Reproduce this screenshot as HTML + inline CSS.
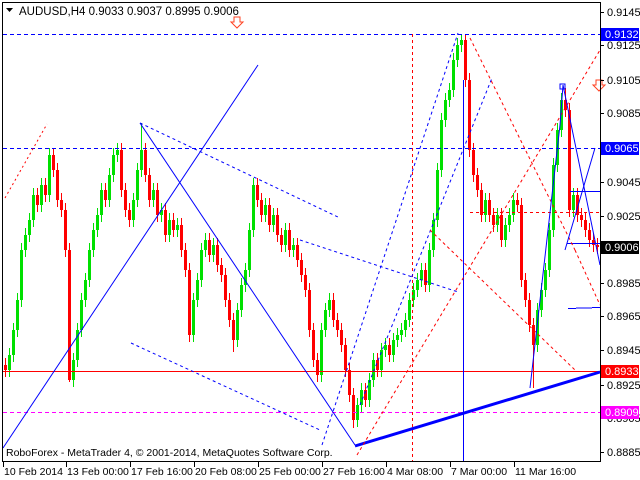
<!DOCTYPE html>
<html><head><meta charset="utf-8"><style>
html,body{margin:0;padding:0;background:#fff;width:640px;height:480px;overflow:hidden}
svg{display:block}
text{font-family:"Liberation Sans",sans-serif;font-size:11px;fill:#000}
</style></head><body>
<svg width="640" height="480" viewBox="0 0 640 480" xmlns="http://www.w3.org/2000/svg">
<rect x="0" y="0" width="640" height="480" fill="#fff"/>
<g shape-rendering="crispEdges" fill="none">
<path stroke="#00e000" stroke-width="1" d="M9.5 348V377M13.5 323V362M17.5 293V337M21.5 243V307M25.5 228V257M29.5 213V242M33.5 188V227M41.5 178V212M49.5 148V202M73.5 353V387M77.5 323V367M81.5 293V337M85.5 273V307M89.5 243V287M93.5 223V257M97.5 208V237M101.5 183V222M109.5 168V207M113.5 148V182M117.5 143V162M133.5 193V227M137.5 163V207M141.5 123V177M153.5 183V207M161.5 203V222M169.5 213V242M177.5 218V237M193.5 293V342M197.5 273V307M201.5 243V287M205.5 233V257M213.5 238V262M237.5 303V347M241.5 278V317M245.5 263V292M249.5 223V277M253.5 178V237M265.5 198V222M273.5 208V232M285.5 223V252M293.5 238V257M321.5 323V382M325.5 303V337M329.5 293V317M357.5 398V427M361.5 383V412M369.5 373V407M373.5 353V387M381.5 343V377M385.5 338V357M393.5 333V362M397.5 328V347M401.5 323V342M405.5 313V337M409.5 293V327M413.5 283V307M417.5 273V297M421.5 263V287M429.5 243V292M433.5 213V257M437.5 163V227M441.5 113V177M445.5 93V127M449.5 83V107M453.5 53V97M457.5 38V67M461.5 34V52M485.5 193V222M497.5 208V232M505.5 218V247M509.5 208V232M513.5 193V222M537.5 303V352M541.5 283V317M545.5 263V297M549.5 223V277M553.5 158V237M557.5 123V172M561.5 93V137M573.5 188V217"/>
<path stroke="#00e000" stroke-width="3" d="M9.5 355V370M13.5 330V355M17.5 300V330M21.5 250V300M25.5 235V250M29.5 220V235M33.5 195V220M41.5 185V205M49.5 155V195M73.5 360V380M77.5 330V360M81.5 300V330M85.5 280V300M89.5 250V280M93.5 230V250M97.5 215V230M101.5 190V215M109.5 175V200M113.5 155V175M117.5 150V155M133.5 200V220M137.5 170V200M141.5 150V170M153.5 190V200M161.5 210V215M169.5 220V235M177.5 225V230M193.5 300V335M197.5 280V300M201.5 250V280M205.5 240V250M213.5 245V255M237.5 310V340M241.5 285V310M245.5 270V285M249.5 230V270M253.5 185V230M265.5 205V215M273.5 215V225M285.5 230V245M293.5 245V250M321.5 330V375M325.5 310V330M329.5 300V310M357.5 405V420M361.5 390V405M369.5 380V400M373.5 360V380M381.5 350V370M385.5 345V350M393.5 340V355M397.5 335V340M401.5 330V335M405.5 320V330M409.5 300V320M413.5 290V300M417.5 280V290M421.5 270V280M429.5 250V285M433.5 220V250M437.5 170V220M441.5 120V170M445.5 100V120M449.5 90V100M453.5 60V90M457.5 45V60M461.5 40V45M485.5 200V215M497.5 215V225M505.5 225V240M509.5 215V225M513.5 200V215M537.5 310V345M541.5 290V310M545.5 270V290M549.5 230V270M553.5 165V230M557.5 130V165M561.5 100V130M573.5 195V210"/>
<path stroke="#ff0000" stroke-width="1" d="M5.5 358V377M37.5 188V212M45.5 178V202M53.5 148V177M57.5 163V207M61.5 193V217M65.5 203V257M69.5 243V382M105.5 183V207M121.5 143V197M125.5 183V217M129.5 203V227M145.5 143V182M149.5 168V207M157.5 183V222M165.5 203V242M173.5 213V237M181.5 218V257M185.5 243V277M189.5 263V342M209.5 233V262M217.5 238V272M221.5 258V282M225.5 268V307M229.5 293V327M233.5 313V352M257.5 178V207M261.5 193V222M269.5 198V232M277.5 208V242M281.5 228V252M289.5 223V257M297.5 238V267M301.5 253V282M305.5 268V297M309.5 283V337M313.5 323V367M317.5 353V382M333.5 293V327M337.5 313V337M341.5 323V352M345.5 338V377M349.5 363V402M353.5 388V428M365.5 383V407M377.5 353V377M389.5 338V362M425.5 263V292M465.5 34V87M469.5 73V157M473.5 143V182M477.5 168V197M481.5 183V222M489.5 193V222M493.5 208V232M501.5 208V247M517.5 193V212M521.5 198V287M525.5 273V307M529.5 293V332M533.5 318V388M565.5 88V117M569.5 103V217M577.5 188V222M581.5 208V227M585.5 213V237M589.5 223V247M593.5 233V252M597.5 238V254"/>
<path stroke="#ff0000" stroke-width="3" d="M5.5 365V370M37.5 195V205M45.5 185V195M53.5 155V170M57.5 170V200M61.5 200V210M65.5 210V250M69.5 250V380M105.5 190V200M121.5 150V190M125.5 190V210M129.5 210V220M145.5 150V175M149.5 175V200M157.5 190V215M165.5 210V235M173.5 220V230M181.5 225V250M185.5 250V270M189.5 270V335M209.5 240V255M217.5 245V265M221.5 265V275M225.5 275V300M229.5 300V320M233.5 320V340M257.5 185V200M261.5 200V215M269.5 205V225M277.5 215V235M281.5 235V245M289.5 230V250M297.5 245V260M301.5 260V275M305.5 275V290M309.5 290V330M313.5 330V360M317.5 360V375M333.5 300V320M337.5 320V330M341.5 330V345M345.5 345V370M349.5 370V395M353.5 395V420M365.5 390V400M377.5 360V370M389.5 345V355M425.5 270V285M465.5 40V80M469.5 80V150M473.5 150V175M477.5 175V190M481.5 190V215M489.5 200V215M493.5 215V225M501.5 215V240M517.5 200V205M521.5 205V280M525.5 280V300M529.5 300V325M533.5 325V345M565.5 100V110M569.5 110V210M577.5 195V215M581.5 215V220M585.5 220V230M589.5 230V240M593.5 240V245M597.5 245V247"/>
</g>
<g fill="none" stroke-width="1" shape-rendering="crispEdges">
<line x1="3" y1="34.5" x2="600" y2="34.5" stroke="#0000ff" stroke-dasharray="4,3"/>
<line x1="3" y1="148.5" x2="600" y2="148.5" stroke="#0000ff" stroke-dasharray="4,3"/>
<line x1="3" y1="371.5" x2="600" y2="371.5" stroke="#ff0000"/>
<line x1="3" y1="412.5" x2="600" y2="412.5" stroke="#ff00ff" stroke-dasharray="4,3"/>
<line x1="412.5" y1="34" x2="412.5" y2="462" stroke="#ff0000" stroke-dasharray="3,3"/>
<line x1="463.5" y1="80" x2="463.5" y2="462" stroke="#0000ff"/>
<line x1="470" y1="212.5" x2="600" y2="212.5" stroke="#ff0000" stroke-dasharray="3,3"/>
<line x1="570" y1="191.5" x2="600" y2="191.5" stroke="#0000ff"/>
<line x1="568" y1="308.5" x2="600" y2="307.5" stroke="#0000ff"/>
<line x1="567" y1="243.5" x2="600" y2="243.5" stroke="#0000ff"/>
</g>
<g fill="none" stroke-width="1">
<line x1="3" y1="448" x2="258" y2="65" stroke="#0000ff"/>
<line x1="140" y1="123" x2="355" y2="445" stroke="#0000ff"/>
<line x1="355" y1="446" x2="600" y2="372" stroke="#0000ff" stroke-width="3"/>
<line x1="140" y1="123" x2="340" y2="218" stroke="#0000ff" stroke-dasharray="3,3"/>
<line x1="131" y1="343" x2="320" y2="430" stroke="#0000ff" stroke-dasharray="3,3"/>
<line x1="322" y1="445" x2="458" y2="33" stroke="#0000ff" stroke-dasharray="3,3"/>
<line x1="360" y1="405" x2="492" y2="78" stroke="#0000ff" stroke-dasharray="3,3"/>
<line x1="300" y1="240" x2="458" y2="292" stroke="#0000ff" stroke-dasharray="3,3"/>
<line x1="5" y1="198" x2="47" y2="124" stroke="#ff0000" stroke-dasharray="2,3"/>
<line x1="470" y1="38" x2="575" y2="250" stroke="#ff0000" stroke-dasharray="3,3"/>
<line x1="575" y1="250" x2="600" y2="305" stroke="#ff0000" stroke-dasharray="3,3"/>
<line x1="430" y1="230" x2="575" y2="370" stroke="#ff0000" stroke-dasharray="3,3"/>
<line x1="357" y1="455" x2="600" y2="50" stroke="#ff0000" stroke-dasharray="3,3"/>
<line x1="530" y1="388" x2="560" y2="125" stroke="#0000ff"/>
<line x1="560" y1="125" x2="563" y2="85" stroke="#0000ff"/>
<line x1="563" y1="85" x2="600" y2="265" stroke="#0000ff"/>
<line x1="565" y1="250" x2="595" y2="148" stroke="#0000ff"/>
<rect x="560" y="84" width="5" height="5" stroke="#0000ff"/>
</g>
<path d="M234 17h6v5h3l-6 6-6-6h3z" fill="none" stroke="#ff4020"/>
<path d="M596 80h6v5h3l-6 6-6-6h3z" fill="none" stroke="#ff4020"/>
<text x="19" y="15" style="font-size:11.5px">AUDUSD,H4  0.9033 0.9037 0.8995 0.9006</text>
<path d="M6 8h7l-3.5 4z" fill="#000"/>
<text x="6" y="456" style="font-size:10.5px">RoboForex - MetaTrader 4, © 2001-2014, MetaQuotes Software Corp.</text>
<g shape-rendering="crispEdges">
<line x1="2.5" y1="3" x2="2.5" y2="462" stroke="#000"/>
<line x1="2" y1="2.5" x2="600" y2="2.5" stroke="#000"/>
<line x1="600.5" y1="2" x2="600.5" y2="462" stroke="#000"/>
<line x1="2" y1="461.5" x2="600" y2="461.5" stroke="#000"/>
</g>
<g shape-rendering="crispEdges" fill="#000">
<rect x="600" y="12" width="4" height="1"/><rect x="600" y="45" width="4" height="1"/><rect x="600" y="80" width="4" height="1"/><rect x="600" y="113" width="4" height="1"/><rect x="600" y="182" width="4" height="1"/><rect x="600" y="216" width="4" height="1"/><rect x="600" y="283" width="4" height="1"/><rect x="600" y="316" width="4" height="1"/><rect x="600" y="350" width="4" height="1"/><rect x="600" y="385" width="4" height="1"/><rect x="600" y="418" width="4" height="1"/><rect x="600" y="452" width="4" height="1"/>
<rect x="3" y="462" width="1" height="5"/><rect x="66" y="462" width="1" height="5"/><rect x="130" y="462" width="1" height="5"/><rect x="194" y="462" width="1" height="5"/><rect x="258" y="462" width="1" height="5"/><rect x="322" y="462" width="1" height="5"/><rect x="386" y="462" width="1" height="5"/><rect x="450" y="462" width="1" height="5"/><rect x="514" y="462" width="1" height="5"/>
</g>
<text x="607" y="16">0.9145</text><text x="607" y="49">0.9125</text><text x="607" y="84">0.9105</text><text x="607" y="117">0.9085</text><text x="607" y="186">0.9045</text><text x="607" y="220">0.9025</text><text x="607" y="287">0.8985</text><text x="607" y="320">0.8965</text><text x="607" y="354">0.8945</text><text x="607" y="389">0.8925</text><text x="607" y="422">0.8905</text><text x="607" y="456">0.8885</text>
<rect x="601" y="28" width="38" height="13" fill="#0000ff"/><text x="605" y="38" style="fill:#fff">0.9132</text>
<rect x="601" y="142" width="38" height="13" fill="#0000ff"/><text x="605" y="152" style="fill:#fff">0.9065</text>
<rect x="601" y="241" width="38" height="13" fill="#000"/><text x="605" y="251" style="fill:#fff">0.9006</text>
<rect x="601" y="365" width="38" height="13" fill="#ff0000"/><text x="605" y="375" style="fill:#fff">0.8933</text>
<rect x="601" y="406" width="38" height="13" fill="#ff00ff"/><text x="605" y="416" style="fill:#fff">0.8909</text>
<g style="font-size:10.5px">
<text x="4" y="475" style="font-size:10.5px">10 Feb 2014</text><text x="67" y="475" style="font-size:10.5px">13 Feb 00:00</text><text x="131" y="475" style="font-size:10.5px">17 Feb 16:00</text><text x="195" y="475" style="font-size:10.5px">20 Feb 08:00</text><text x="259" y="475" style="font-size:10.5px">25 Feb 00:00</text><text x="323" y="475" style="font-size:10.5px">27 Feb 16:00</text><text x="387" y="475" style="font-size:10.5px">4 Mar 08:00</text><text x="451" y="475" style="font-size:10.5px">7 Mar 00:00</text><text x="515" y="475" style="font-size:10.5px">11 Mar 16:00</text>
</g>
</svg>
</body></html>
